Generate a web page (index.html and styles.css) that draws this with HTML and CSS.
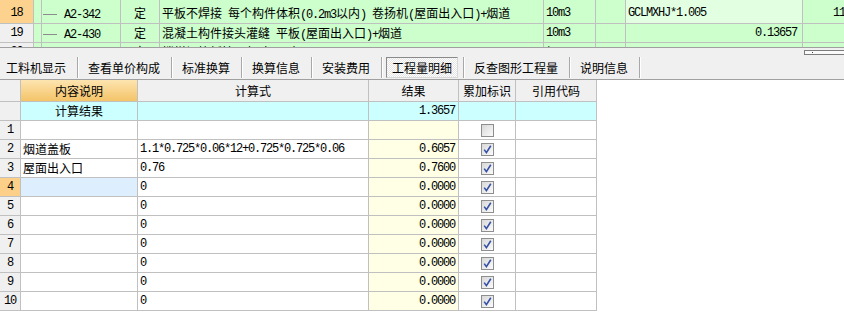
FILE: index.html
```html
<!DOCTYPE html>
<html lang="zh-CN">
<head>
    <meta charset="UTF-8">
    <meta name="viewport" content="width=device-width, initial-scale=1.0">
    <title>工程量明细</title>
    <link rel="stylesheet" href="styles.css">
</head>
<body>
    <!-- 定额列表 -->
    <div class="top-grid">
        <div class="trow first">
            <div class="tc hd sel m">18</div>
            <div class="tc"></div>
            <div class="tc code"><span class="tree"></span><span class="m">A2-342</span></div>
            <div class="tc ctr">定</div>
            <div class="tc">平板不焊接<span class="m"> </span>每个构件体积<span class="m">(0.2m3</span>以内<span class="m">) </span>卷扬机<span class="m">(</span>屋面出入口<span class="m">)+</span>烟道</div>
            <div class="tc m">10m3</div>
            <div class="tc"></div>
            <div class="tc cur m">GCLMXHJ*1.005</div>
            <div class="tc last m">11</div>
        </div>
        <div class="trow">
            <div class="tc hd m">19</div>
            <div class="tc"></div>
            <div class="tc code"><span class="tree"></span><span class="m">A2-430</span></div>
            <div class="tc ctr">定</div>
            <div class="tc">混凝土构件接头灌缝<span class="m"> </span>平板<span class="m">(</span>屋面出入口<span class="m">)+</span>烟道</div>
            <div class="tc m">10m3</div>
            <div class="tc"></div>
            <div class="tc r m">0.13657</div>
            <div class="tc"></div>
        </div>
        <div class="trow">
            <div class="tc hd m">20</div>
            <div class="tc"></div>
            <div class="tc code"><span class="tree"></span><span class="m">A4-118</span></div>
            <div class="tc ctr">定</div>
            <div class="tc">楼梯钢筋板接<span class="m"> (</span>每吨<span class="m">)</span>以内</div>
            <div class="tc m">t</div>
            <div class="tc"></div>
            <div class="tc"></div>
            <div class="tc"></div>
        </div>
    </div>

    <!-- 工具栏 -->
    <div class="toolbar">
        <div class="tab">工料机显示</div>
        <div class="tab">查看单价构成</div>
        <div class="tab">标准换算</div>
        <div class="tab">换算信息</div>
        <div class="tab">安装费用</div>
        <div class="tab on"><span>工程量明细</span></div>
        <div class="tab">反查图形工程量</div>
        <div class="tab">说明信息</div>
        <div class="scroll-thumb"><i></i></div>
    </div>

    <!-- 工程量明细 -->
    <div class="grid">
        <div class="c h rh"></div>
        <div class="c h sel">内容说明</div>
        <div class="c h">计算式</div>
        <div class="c h">结果</div>
        <div class="c h">累加标识</div>
        <div class="c h">引用代码</div>

        <div class="c rh"></div>
        <div class="c cy ctr">计算结果</div>
        <div class="c cy"></div>
        <div class="c cy num m">1.3657</div>
        <div class="c cy"></div>
        <div class="c cy"></div>

        <div class="c rh m">1</div>
        <div class="c"></div>
        <div class="c"></div>
        <div class="c res m"></div>
        <div class="c ck"><span class="chk"></span></div>
        <div class="c"></div>

        <div class="c rh m">2</div>
        <div class="c">烟道盖板</div>
        <div class="c m">1.1*0.725*0.06*12+0.725*0.725*0.06</div>
        <div class="c res m">0.6057</div>
        <div class="c ck"><span class="chk"><svg viewBox="0 0 11 11" width="11" height="11"><path d="M2.2 5.6 L4.4 8.6 L8.8 1.8"/></svg></span></div>
        <div class="c"></div>

        <div class="c rh m">3</div>
        <div class="c">屋面出入口</div>
        <div class="c m">0.76</div>
        <div class="c res m">0.7600</div>
        <div class="c ck"><span class="chk"><svg viewBox="0 0 11 11" width="11" height="11"><path d="M2.2 5.6 L4.4 8.6 L8.8 1.8"/></svg></span></div>
        <div class="c"></div>

        <div class="c rh sel m">4</div>
        <div class="c cur"></div>
        <div class="c m">0</div>
        <div class="c res m">0.0000</div>
        <div class="c ck"><span class="chk"><svg viewBox="0 0 11 11" width="11" height="11"><path d="M2.2 5.6 L4.4 8.6 L8.8 1.8"/></svg></span></div>
        <div class="c"></div>

        <div class="c rh m">5</div>
        <div class="c"></div>
        <div class="c m">0</div>
        <div class="c res m">0.0000</div>
        <div class="c ck"><span class="chk"><svg viewBox="0 0 11 11" width="11" height="11"><path d="M2.2 5.6 L4.4 8.6 L8.8 1.8"/></svg></span></div>
        <div class="c"></div>

        <div class="c rh m">6</div>
        <div class="c"></div>
        <div class="c m">0</div>
        <div class="c res m">0.0000</div>
        <div class="c ck"><span class="chk"><svg viewBox="0 0 11 11" width="11" height="11"><path d="M2.2 5.6 L4.4 8.6 L8.8 1.8"/></svg></span></div>
        <div class="c"></div>

        <div class="c rh m">7</div>
        <div class="c"></div>
        <div class="c m">0</div>
        <div class="c res m">0.0000</div>
        <div class="c ck"><span class="chk"><svg viewBox="0 0 11 11" width="11" height="11"><path d="M2.2 5.6 L4.4 8.6 L8.8 1.8"/></svg></span></div>
        <div class="c"></div>

        <div class="c rh m">8</div>
        <div class="c"></div>
        <div class="c m">0</div>
        <div class="c res m">0.0000</div>
        <div class="c ck"><span class="chk"><svg viewBox="0 0 11 11" width="11" height="11"><path d="M2.2 5.6 L4.4 8.6 L8.8 1.8"/></svg></span></div>
        <div class="c"></div>

        <div class="c rh m">9</div>
        <div class="c"></div>
        <div class="c m">0</div>
        <div class="c res m">0.0000</div>
        <div class="c ck"><span class="chk"><svg viewBox="0 0 11 11" width="11" height="11"><path d="M2.2 5.6 L4.4 8.6 L8.8 1.8"/></svg></span></div>
        <div class="c"></div>

        <div class="c rh m">10</div>
        <div class="c"></div>
        <div class="c m">0</div>
        <div class="c res m">0.0000</div>
        <div class="c ck"><span class="chk"><svg viewBox="0 0 11 11" width="11" height="11"><path d="M2.2 5.6 L4.4 8.6 L8.8 1.8"/></svg></span></div>
        <div class="c"></div>
    </div>
</body>
</html>
```

FILE: styles.css
```css
body { margin: 0; background: #fff; color: #000; font-family: "Noto Sans CJK SC", "Liberation Sans", sans-serif; font-size: 12px; overflow: hidden; }
.m { font-family: "Liberation Mono", "Noto Sans CJK SC", monospace; font-size: 12px; letter-spacing: -1.2px; }
.ctr { text-align: center; }

/* top grid */
.top-grid { height: 47px; overflow: hidden; background: #ccffcc; }
.trow { display: grid; grid-template-columns: 34px 8px 79px 39px 384px 52px 30px 177px 80px; height: 19px; }
.trow.first { height: 24px; }
.tc { box-sizing: border-box; border-right: 1px solid #c0c0c0; border-bottom: 1px solid #c0c0c0; padding: 0 2px; line-height: 18px; white-space: nowrap; overflow: hidden; }
.first .tc { padding-top: 4px; }
.tc.hd { background: #f0f0f0; text-align: center; padding-left: 0; padding-right: 0; }
.tc.hd.sel { background: #fdd28e; }
.tc.code { padding-left: 1px; }
.tree { display: inline-block; width: 14px; border-top: 1px solid #8c8c8c; vertical-align: middle; margin-right: 7px; }
.tc.cur { background: #e2ffe2; }
.tc.r { text-align: right; padding-right: 5px; }
.tc.last { padding-left: 30px; }

/* toolbar */
.toolbar { position: relative; display: flex; height: 33px; box-sizing: border-box; padding-top: 9px; background: #f0f0f0; border-top: 1px solid #a0a0a0; border-bottom: 1px solid #a0a0a0; }
.tab { height: 21px; line-height: 21px; padding: 0 11px 0 10px; border-right: 1px solid #a8a8a8; box-shadow: 1px 0 #fff; white-space: nowrap; }
.tab:first-child { padding-left: 6px; }
.tab.on { padding: 0 5px 0 4px; }
.tab.on span { display: block; height: 21px; box-sizing: border-box; line-height: 19px; padding: 0 5px; border: 1px solid #8a8a8a; border-right-color: #d8d8d8; border-bottom-color: #d8d8d8; background: repeating-conic-gradient(#ffffff 0 25%, #e4e4e4 0 50%) 0 0 / 2px 2px; }
.scroll-thumb { position: absolute; left: 804px; top: 2px; width: 50px; height: 5px; box-sizing: border-box; border: 1px solid #7c7c7c; background: #fafafa; }
.scroll-thumb i { position: absolute; left: 7px; top: 1px; width: 1px; height: 1px; background: #404040; }

/* detail grid */
.grid { display: grid; grid-template-columns: 21px 117px 231px 90px 57px 81px; width: 597px; }
.c { box-sizing: border-box; height: 19px; line-height: 18px; padding: 0 2px; border-right: 1px solid #c0c0c0; border-bottom: 1px solid #c0c0c0; white-space: nowrap; overflow: hidden; }
.c.h { height: 22px; line-height: 21px; background: #f0f0f0; text-align: center; }
.c.h.sel { background: linear-gradient(#fde4b0, #f4c468); }
.c.rh { background: #f0f0f0; text-align: center; padding: 0; }
.c.rh.sel { background: #fdd08a; }
.c.cy { background: #ccffff; }
.c.num { text-align: right; padding-right: 3px; }
.c.res { background: #ffffe6; text-align: right; padding-right: 3px; }
.c.cur { background: #ddeeff; }
.c.ck { display: flex; align-items: center; justify-content: center; }
.chk { display: block; width: 13px; height: 13px; box-sizing: border-box; border: 1px solid #8e8e8e; background: linear-gradient(135deg, #d8d8d8, #fbfbfb); }
.chk svg { display: block; }
.chk path { fill: none; stroke: #3550a6; stroke-width: 1.6; }
```
